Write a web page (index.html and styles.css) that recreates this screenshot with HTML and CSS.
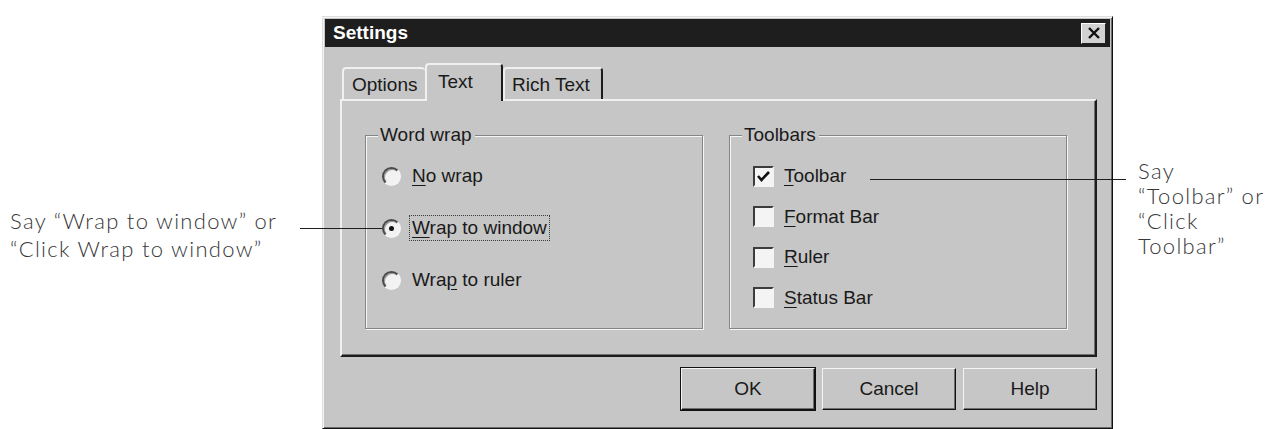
FILE: index.html
```html
<!DOCTYPE html>
<html lang="en">
<head>
    <meta charset="UTF-8">
    <title>Settings</title>
    <link rel="stylesheet" href="styles.css">
</head>
<body>
<div class="figure">
    <p class="note note-left">Say “Wrap to window” or<br>“Click Wrap to window”</p>

    <div class="dialog">
        <div class="titlebar">
            <span class="title">Settings</span>
            <span class="close">
                <svg width="16" height="14" viewBox="0 0 16 14"><path d="M3 2 L13 12 M13 2 L3 12" stroke="#111" stroke-width="2.4" fill="none"/></svg>
            </span>
        </div>
        <div class="dialog-body">
            <div class="tabs">
                <div class="tab tab-options">Options</div>
                <div class="tab tab-text active">Text</div>
                <div class="tab tab-rich">Rich Text</div>
            </div>
            <div class="panel">
                <fieldset class="group">
                    <legend>Word wrap</legend>
                    <div class="options radios">
                        <div class="option"><span class="radio"></span><span class="label"><u>N</u>o wrap</span></div>
                        <div class="option"><span class="radio checked"></span><span class="label focus"><u>W</u>rap to window</span></div>
                        <div class="option"><span class="radio"></span><span class="label">Wra<u>p</u> to ruler</span></div>
                    </div>
                </fieldset>
                <fieldset class="group">
                    <legend>Toolbars</legend>
                    <div class="options checks">
                        <div class="option">
                            <span class="check"><svg width="17" height="17" viewBox="0 0 17 17"><path d="M3 8 L6.5 12 L14 4" stroke="#111" stroke-width="2.6" fill="none"/></svg></span>
                            <span class="label"><u>T</u>oolbar</span>
                        </div>
                        <div class="option"><span class="check"></span><span class="label"><u>F</u>ormat Bar</span></div>
                        <div class="option"><span class="check"></span><span class="label"><u>R</u>uler</span></div>
                        <div class="option"><span class="check"></span><span class="label"><u>S</u>tatus Bar</span></div>
                    </div>
                </fieldset>
            </div>
            <div class="buttons">
                <button class="btn default">OK</button>
                <button class="btn">Cancel</button>
                <button class="btn">Help</button>
            </div>
        </div>
    </div>

    <p class="note note-right">Say<br>“Toolbar” or<br>“Click<br>Toolbar”</p>

    <!-- callout lines -->
    <div class="leader leader-left"></div>
    <div class="leader leader-right"></div>
</div>
</body>
</html>
```

FILE: styles.css
```css
body { margin: 0; background: #fff; font-family: "Liberation Sans", Arial, sans-serif; }
.figure { position: relative; display: flex; width: 1265px; height: 429px; overflow: hidden; }

/* annotations */
.note { margin: 0; font-family: Lato, "Open Sans", sans-serif; font-weight: 300; color: #383838; white-space: nowrap; font-size: 22px; letter-spacing: 1.3px; }
.note-left { width: 322px; box-sizing: border-box; padding: 207px 0 0 10px; line-height: 28px; }
.note-right { padding: 158px 0 0 25px; line-height: 25px; }
.leader { position: absolute; height: 1px; background: #1e1e1e; }
.leader-left { left: 300px; top: 228px; width: 82px; }
.leader-right { left: 870px; top: 179px; width: 256px; }

/* window */
.dialog { box-sizing: border-box; width: 791px; height: 413px; margin-top: 16px; padding: 2px; background: #c6c6c6; border: 1px solid; border-color: #dedede #111 #111 #dedede; box-shadow: inset 1px 1px #f4f4f4, inset -1px -1px #6d6d6d; color: #1a1a1a; }
.titlebar { height: 28px; display: flex; align-items: center; justify-content: space-between; padding: 0 4px 0 8px; background: #1e1e1e; color: #fff; font-weight: bold; font-size: 19px; }
.close { box-sizing: border-box; width: 25px; height: 21px; display: flex; align-items: center; justify-content: center; background: #d2d2d2; border: 1px solid; border-color: #fff #222 #222 #fff; }
.dialog-body { padding: 16px 13px 0 15px; }

/* tabs */
.tabs { display: flex; align-items: flex-end; height: 36px; padding-left: 2px; }
.tab { box-sizing: border-box; height: 32px; padding-top: 5px; font-size: 19px; line-height: 22px; border-top: 2px solid #f0f0f0; border-left: 2px solid #f0f0f0; border-radius: 4px 4px 0 0; }
.tab-options { width: 83px; padding-left: 8px; }
.tab-text { width: 78px; padding-left: 11px; }
.tab-rich { width: 100px; padding-left: 7px; border-right: 2px solid #1c1c1c; }
.tab.active { position: relative; z-index: 1; height: 38px; margin-bottom: -2px; padding-top: 6px; background: #c6c6c6; border-right: 2px solid #1c1c1c; }

.panel { box-sizing: border-box; height: 258px; display: flex; gap: 26px; padding: 23px 0 0 23px; border: 2px solid; border-color: #f0f0f0 #1c1c1c #1c1c1c #f0f0f0; box-shadow: inset -1px -1px #707070; }

/* group boxes */
.group { box-sizing: border-box; width: 338px; height: 205px; margin: 0; padding: 0; border: 1px solid #858585; box-shadow: 1px 1px #f6f6f6, inset 1px 1px #f6f6f6; }
.group legend { margin-left: 12px; padding: 0 3px 0 2px; font-size: 19px; line-height: 22px; background: #c6c6c6; }
.options { display: flex; flex-direction: column; }
.radios { gap: 24px; margin-top: 16px; padding-left: 16px; }
.checks { gap: 14.5px; margin-top: 17px; padding-left: 23px; }
.option { display: flex; align-items: center; height: 28px; font-size: 19px; }
.checks .option { height: 26px; }
.label { padding: 1px 2px; border: 1px dotted transparent; line-height: 22px; }
.label.focus { border-color: #3a3a3a; }
.label u { text-underline-offset: 3px; }

.radio { box-sizing: border-box; position: relative; width: 19px; height: 19px; margin-right: 8px; border-radius: 50%; border: 2px solid; border-color: #4a4a4a #f4f4f4 #f4f4f4 #4a4a4a; background: #f2f2f2; box-shadow: inset 1px 1px #9a9a9a; }
.radio.checked::after { content: ""; position: absolute; left: 5px; top: 5px; width: 5px; height: 5px; border-radius: 50%; background: #111; }

.check { box-sizing: border-box; width: 21px; height: 21px; margin-right: 7px; display: flex; align-items: center; justify-content: center; border: 2px solid; border-color: #3c3c3c #f4f4f4 #f4f4f4 #3c3c3c; background: #f4f4f4; }

/* buttons */
.buttons { display: flex; justify-content: flex-end; gap: 7px; margin-top: 11px; }
.btn { box-sizing: border-box; width: 134px; height: 42px; padding: 0; font-family: "Liberation Sans", Arial, sans-serif; font-size: 19px; color: #1a1a1a; background: #c6c6c6; border: 1px solid; border-color: #f4f4f4 #111 #111 #f4f4f4; box-shadow: inset -1px -1px #6e6e6e; }
.btn.default { box-shadow: 0 0 0 1px #111, inset -1px -1px #6e6e6e; }
```
